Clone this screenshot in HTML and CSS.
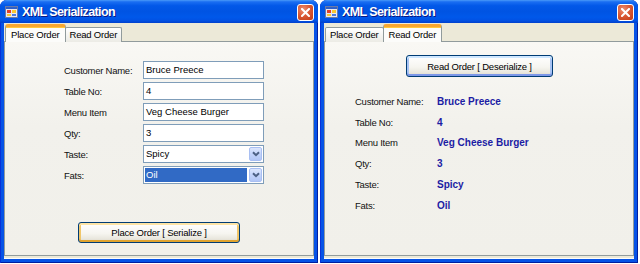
FILE: index.html
```html
<!DOCTYPE html>
<html>
<head>
<meta charset="utf-8">
<title>XML Serialization</title>
<link rel="stylesheet" href="styles.css">
</head>
<body>
<div class="desk">
  <section class="win">
    <header class="titlebar">
      <svg class="app-icon" width="13" height="12" viewBox="0 0 13 12">
        <rect x="0.5" y="0.5" width="12" height="11" fill="#e8e8f0" stroke="#6a7aa8"/>
        <rect x="1" y="1" width="11" height="2" fill="#3060c8"/>
        <rect x="2" y="4" width="4" height="3" fill="#e0402a"/>
        <rect x="7" y="4" width="4" height="3" fill="#f8c830"/>
        <rect x="2" y="8" width="4" height="2" fill="#f8c830"/>
        <rect x="7" y="8" width="4" height="2" fill="#4a7ae0"/>
      </svg>
      <span class="title">XML Serialization</span>
      <span class="close">
        <svg width="9" height="9" viewBox="0 0 9 9"><path d="M1 1L8 8M8 1L1 8" stroke="#fff" stroke-width="2" stroke-linecap="square"/></svg>
      </span>
    </header>
    <div class="client">
      <div class="tabs">
        <span class="tab active">Place Order</span>
        <span class="tab">Read Order</span>
      </div>
      <div class="panel">
        <div class="form">
          <span class="label">Customer Name:</span><div class="textbox">Bruce Preece</div>
          <span class="label">Table No:</span><div class="textbox">4</div>
          <span class="label">Menu Item</span><div class="textbox">Veg Cheese Burger</div>
          <span class="label">Qty:</span><div class="textbox">3</div>
          <span class="label">Taste:</span>
          <div class="combo"><span class="combo-text">Spicy</span><span class="combo-btn"><svg width="8" height="6" viewBox="0 0 8 6"><path d="M1 1.2L4 4.2L7 1.2" fill="none" stroke="#4d6185" stroke-width="2"/></svg></span></div>
          <span class="label">Fats:</span>
          <div class="combo"><span class="combo-text selected">Oil</span><span class="combo-btn"><svg width="8" height="6" viewBox="0 0 8 6"><path d="M1 1.2L4 4.2L7 1.2" fill="none" stroke="#4d6185" stroke-width="2"/></svg></span></div>
        </div>
        <button class="btn btn-hot btn-place">Place Order [ Serialize ]</button>
      </div>
    </div>
  </section>

  <section class="win">
    <header class="titlebar">
      <svg class="app-icon" width="13" height="12" viewBox="0 0 13 12">
        <rect x="0.5" y="0.5" width="12" height="11" fill="#e8e8f0" stroke="#6a7aa8"/>
        <rect x="1" y="1" width="11" height="2" fill="#3060c8"/>
        <rect x="2" y="4" width="4" height="3" fill="#e0402a"/>
        <rect x="7" y="4" width="4" height="3" fill="#f8c830"/>
        <rect x="2" y="8" width="4" height="2" fill="#f8c830"/>
        <rect x="7" y="8" width="4" height="2" fill="#4a7ae0"/>
      </svg>
      <span class="title">XML Serialization</span>
      <span class="close">
        <svg width="9" height="9" viewBox="0 0 9 9"><path d="M1 1L8 8M8 1L1 8" stroke="#fff" stroke-width="2" stroke-linecap="square"/></svg>
      </span>
    </header>
    <div class="client">
      <div class="tabs">
        <span class="tab">Place Order</span>
        <span class="tab active">Read Order</span>
      </div>
      <div class="panel">
        <button class="btn btn-focus btn-read">Read Order [ Deserialize ]</button>
        <div class="readout">
          <span class="label">Customer Name:</span><span class="value">Bruce Preece</span>
          <span class="label">Table No:</span><span class="value">4</span>
          <span class="label">Menu Item</span><span class="value">Veg Cheese Burger</span>
          <span class="label">Qty:</span><span class="value">3</span>
          <span class="label">Taste:</span><span class="value">Spicy</span>
          <span class="label">Fats:</span><span class="value">Oil</span>
        </div>
      </div>
    </div>
  </section>
</div>
</body>
</html>
```

FILE: styles.css
```css
* { box-sizing: border-box; }

html, body {
  margin: 0;
  padding: 0;
  background: #ffffff;
}

body {
  font-family: "Liberation Sans", Arial, sans-serif;
  font-size: 9px;
  color: #000;
}

.desk {
  display: flex;
  gap: 2px;
  width: 640px;
  height: 264px;
}

.win {
  width: 318px;
  height: 263px;
  display: flex;
  flex-direction: column;
  border-radius: 7px 7px 0 0;
  overflow: hidden;
  background: #0653e6;
  box-shadow: inset 1px 0 #0831d9, inset -1px 0 #001ea0, inset 0 -1px #001ea0;
}

.titlebar {
  flex: none;
  height: 23px;
  display: flex;
  align-items: center;
  padding: 0 4px 0 5px;
  background: linear-gradient(#4a9af8 0%, #1a6ef2 8%, #0258e8 25%, #0054e3 50%, #0058ea 75%, #0150e2 90%, #0040cc 100%);
}

.app-icon {
  flex: none;
  margin-top: 1px;
}

.title {
  margin-left: 4px;
  font-weight: bold;
  font-size: 12.5px;
  letter-spacing: -0.6px;
  color: #fff;
  text-shadow: 1px 1px 0 #0a1883;
  flex: 1;
}

.close {
  width: 17px;
  height: 17px;
  margin-top: 1px;
  border: 1px solid #fff;
  border-radius: 3px;
  background: radial-gradient(circle at 35% 30%, #ec8f72 0%, #da5a36 45%, #c23a12 100%);
  display: flex;
  align-items: center;
  justify-content: center;
}

.client {
  flex: 1;
  margin: 0 4px 4px;
  background: #ece9d8;
  display: flex;
  flex-direction: column;
  padding: 1px 0 3px 0;
  box-shadow: inset 0 -1px #fcfcfa;
}

.tabs {
  display: flex;
  align-items: flex-end;
  height: 18px;
  padding-left: 1px;
  margin-bottom: -1px;
  position: relative;
  z-index: 1;
}

.tab {
  height: 15px;
  padding: 0 4px;
  line-height: 14px;
  font-size: 9.5px;
  letter-spacing: -0.2px;
  border: 1px solid #919b9c;
  border-bottom: none;
  border-radius: 2px 2px 0 0;
  background: linear-gradient(#ffffff, #f3f3ef 60%, #ecebe5);
  white-space: nowrap;
}

.tab + .tab {
  margin-left: -1px;
}

.tab.active {
  height: 18px;
  padding: 0 5px;
  line-height: 16px;
  background: #fcfcfa;
  border-top: 3px solid #f7a632;
  box-shadow: inset 0 1px #ffc83c;
  border-radius: 3px 3px 0 0;
}

.panel {
  flex: 1;
  border: 1px solid #919b9c;
  background: linear-gradient(#f9f8f4, #f2f1ec 40%, #f1f0ea);
  display: flex;
  flex-direction: column;
  align-items: flex-start;
}

.form {
  display: grid;
  grid-template-columns: 79px 121px;
  grid-auto-rows: 18px;
  row-gap: 3px;
  margin: 19px 0 0 59px;
}

.label {
  display: flex;
  align-items: center;
  white-space: nowrap;
  font-size: 9.5px;
  letter-spacing: -0.25px;
  color: #111;
}

.textbox {
  border: 1px solid #7f9db9;
  background: #fff;
  padding-left: 2px;
  line-height: 15px;
  font-size: 9.5px;
  white-space: nowrap;
}

.combo {
  border: 1px solid #7f9db9;
  background: #fff;
  display: flex;
  padding: 1px;
}

.combo-text {
  flex: 1;
  padding-left: 1px;
  line-height: 14px;
  font-size: 9.5px;
  margin-right: 2px;
}

.combo-text.selected {
  background: #316ac5;
  color: #fff;
}

.combo-btn {
  width: 13px;
  border: 1px solid #a9bff2;
  border-radius: 2px;
  background: linear-gradient(#dce6fd, #c3d4fb 50%, #b2c6f6);
  display: flex;
  align-items: center;
  justify-content: center;
}

.btn {
  font-family: "Liberation Sans", Arial, sans-serif;
  font-size: 9.5px;
  letter-spacing: -0.2px;
  color: #000;
  border: 1px solid #003c74;
  border-radius: 3px;
  background: linear-gradient(#ffffff, #f6f5f0 55%, #e8e6dc 85%, #d6d0c5);
  padding: 0;
}

.btn-hot {
  box-shadow: inset 0 2px #fde4a6, inset 0 -2px #e0a431, inset 2px 0 #f0c66a, inset -2px 0 #f0c66a;
}

.btn-focus {
  box-shadow: inset 0 2px #cee7ff, inset 0 -2px #7d98e8, inset 2px 0 #a9c4f4, inset -2px 0 #a9c4f4;
}

.btn-place {
  width: 162px;
  height: 21px;
  margin: 38px 0 0 73px;
}

.btn-read {
  width: 147px;
  height: 22px;
  margin: 13px 0 0 81px;
}

.readout {
  display: grid;
  grid-template-columns: 82px auto;
  grid-auto-rows: 20.8px;
  margin: 14px 0 0 30px;
  align-items: center;
}

.value {
  font-weight: bold;
  font-size: 10px;
  color: #1c1ca4;
  white-space: nowrap;
}
```
